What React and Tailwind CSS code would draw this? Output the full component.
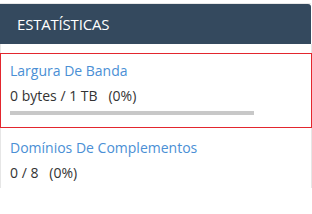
export default function App() {
  const font = { fontFamily: '"Open Sans", "Liberation Sans", sans-serif' };
  return (
    <div className="w-[312px] h-[214px] bg-white pt-[3px]" style={font}>
      <div className="w-[311px] h-px bg-[#e8e8e8]" />
      <div className="w-[311px] h-[40px] bg-[#34495e] rounded-tr-[3px] flex items-center pl-[17px]">
        <h3 className="text-white text-[15px] leading-none tracking-[-0.2px]">ESTATÍSTICAS</h3>
      </div>
      <div className="w-[312px] border-x border-[#e6e6e6] pt-[9px] pb-[5px]">
        <div className="-mx-px border border-[#e3262e] pl-[9px] pt-[7px] pb-[12px]">
          <div className="text-[#4a8fd5] text-[14px] leading-[20px]">Largura De Banda</div>
          <div className="text-[#333] text-[14px] leading-[20px] mt-[5px]">
            0 bytes / 1 TB&nbsp;&nbsp; (0%)
          </div>
          <div className="w-[244px] h-[4px] bg-[#c8c8c8] mt-[5px]" />
        </div>
        <div className="pl-[9px] pt-[10px]">
          <div className="text-[#4a8fd5] text-[14px] leading-[20px]">Domínios De Complementos</div>
          <div className="text-[#333] text-[14px] leading-[20px] mt-[5px]">
            0 / 8&nbsp;&nbsp; (0%)
          </div>
        </div>
      </div>
    </div>
  );
}
